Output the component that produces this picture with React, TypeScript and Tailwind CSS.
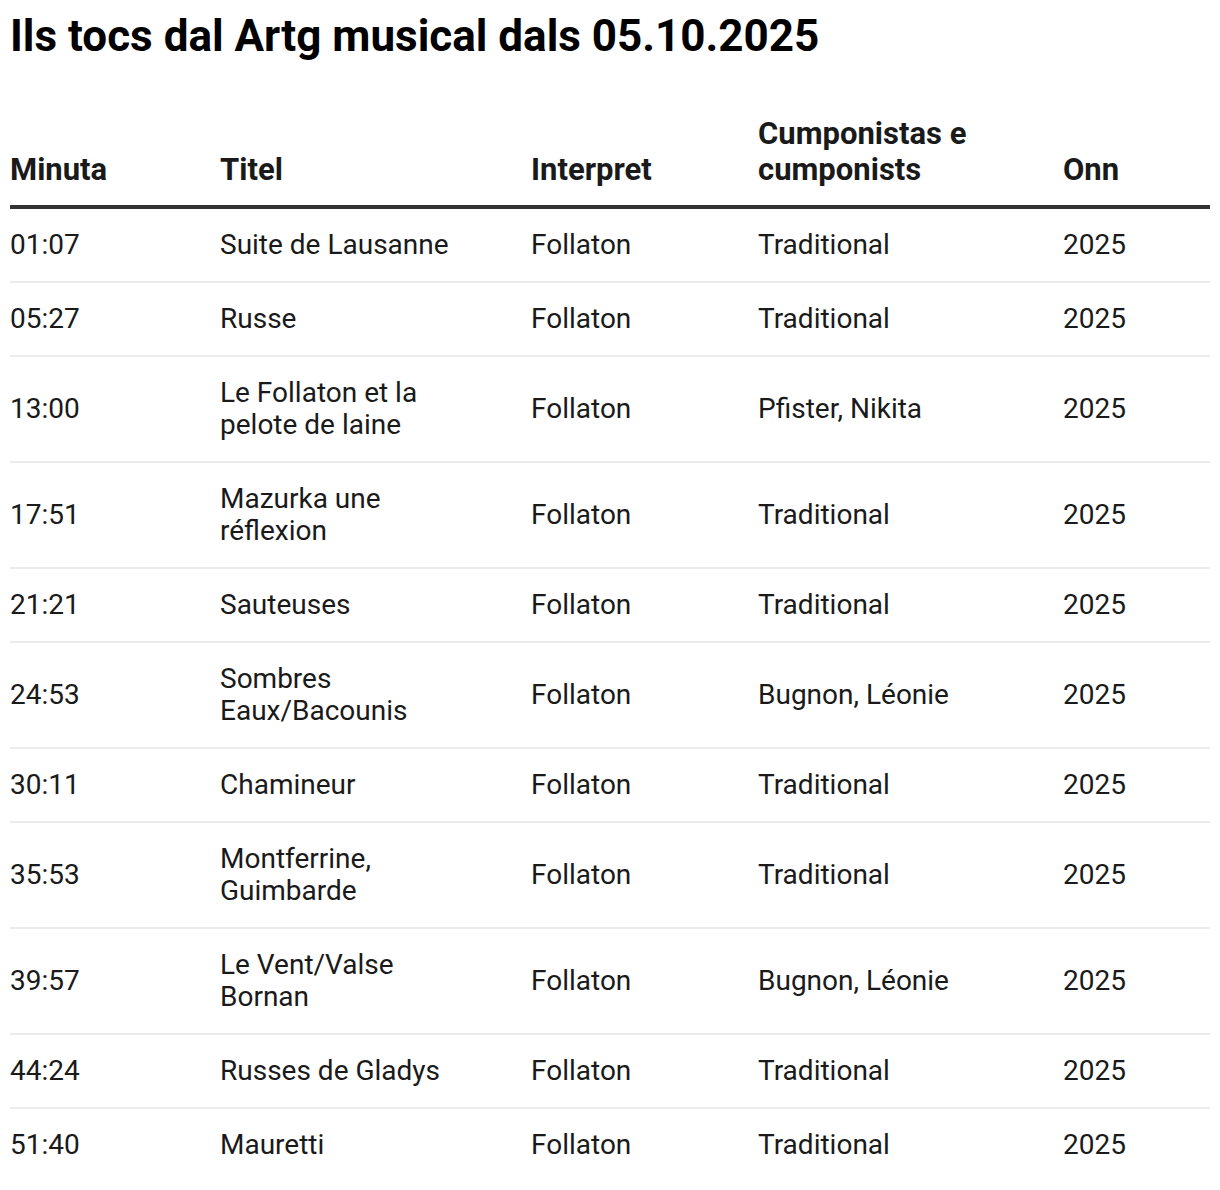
import React from 'react'

type Track = {
  minute: string
  title: string
  artist: string
  composer: string
  year: string
}

const tracks: Track[] = [
  { minute: '01:07', title: 'Suite de Lausanne', artist: 'Follaton', composer: 'Traditional', year: '2025' },
  { minute: '05:27', title: 'Russe', artist: 'Follaton', composer: 'Traditional', year: '2025' },
  { minute: '13:00', title: 'Le Follaton et la pelote de laine', artist: 'Follaton', composer: 'Pfister, Nikita', year: '2025' },
  { minute: '17:51', title: 'Mazurka une réflexion', artist: 'Follaton', composer: 'Traditional', year: '2025' },
  { minute: '21:21', title: 'Sauteuses', artist: 'Follaton', composer: 'Traditional', year: '2025' },
  { minute: '24:53', title: 'Sombres Eaux/Bacounis', artist: 'Follaton', composer: 'Bugnon, Léonie', year: '2025' },
  { minute: '30:11', title: 'Chamineur', artist: 'Follaton', composer: 'Traditional', year: '2025' },
  { minute: '35:53', title: 'Montferrine, Guimbarde', artist: 'Follaton', composer: 'Traditional', year: '2025' },
  { minute: '39:57', title: 'Le Vent/Valse Bornan', artist: 'Follaton', composer: 'Bugnon, Léonie', year: '2025' },
  { minute: '44:24', title: 'Russes de Gladys', artist: 'Follaton', composer: 'Traditional', year: '2025' },
  { minute: '51:40', title: 'Mauretti', artist: 'Follaton', composer: 'Traditional', year: '2025' },
]

const App: React.FC = () => {
  return (
    <div className="px-[10px] pt-[10px] font-['Roboto',sans-serif] text-[#1a1a1a]">
      <h1 className="text-[44px] leading-[52px] font-bold text-black">
        Ils tocs dal Artg musical dals 05.10.2025
      </h1>
      <table className="mt-[54px] w-[1200px] table-fixed border-collapse text-left">
        <colgroup>
          <col className="w-[210px]" />
          <col className="w-[311px]" />
          <col className="w-[227px]" />
          <col className="w-[305px]" />
          <col className="w-[147px]" />
        </colgroup>
        <thead>
          <tr className="border-b-4 border-[#333333] text-[31px] leading-[36px] font-bold">
            <th className="pr-4 pb-[17px] align-bottom">Minuta</th>
            <th className="pr-4 pb-[17px] align-bottom">Titel</th>
            <th className="pr-4 pb-[17px] align-bottom">Interpret</th>
            <th className="pr-4 pb-[17px] align-bottom">Cumponistas e cumponists</th>
            <th className="pr-4 pb-[17px] align-bottom">Onn</th>
          </tr>
        </thead>
        <tbody className="text-[28px] leading-[32px]">
          {tracks.map((t, i) => (
            <tr
              key={t.minute}
              className={i < tracks.length - 1 ? 'border-b-2 border-[#ebebeb]' : ''}
            >
              <td className="py-5 pr-4 align-middle">{t.minute}</td>
              <td className="py-5 pr-[60px] align-middle">{t.title}</td>
              <td className="py-5 pr-4 align-middle">{t.artist}</td>
              <td className="py-5 pr-4 align-middle">{t.composer}</td>
              <td className="py-5 pr-4 align-middle">{t.year}</td>
            </tr>
          ))}
        </tbody>
      </table>
    </div>
  )
}

export default App
